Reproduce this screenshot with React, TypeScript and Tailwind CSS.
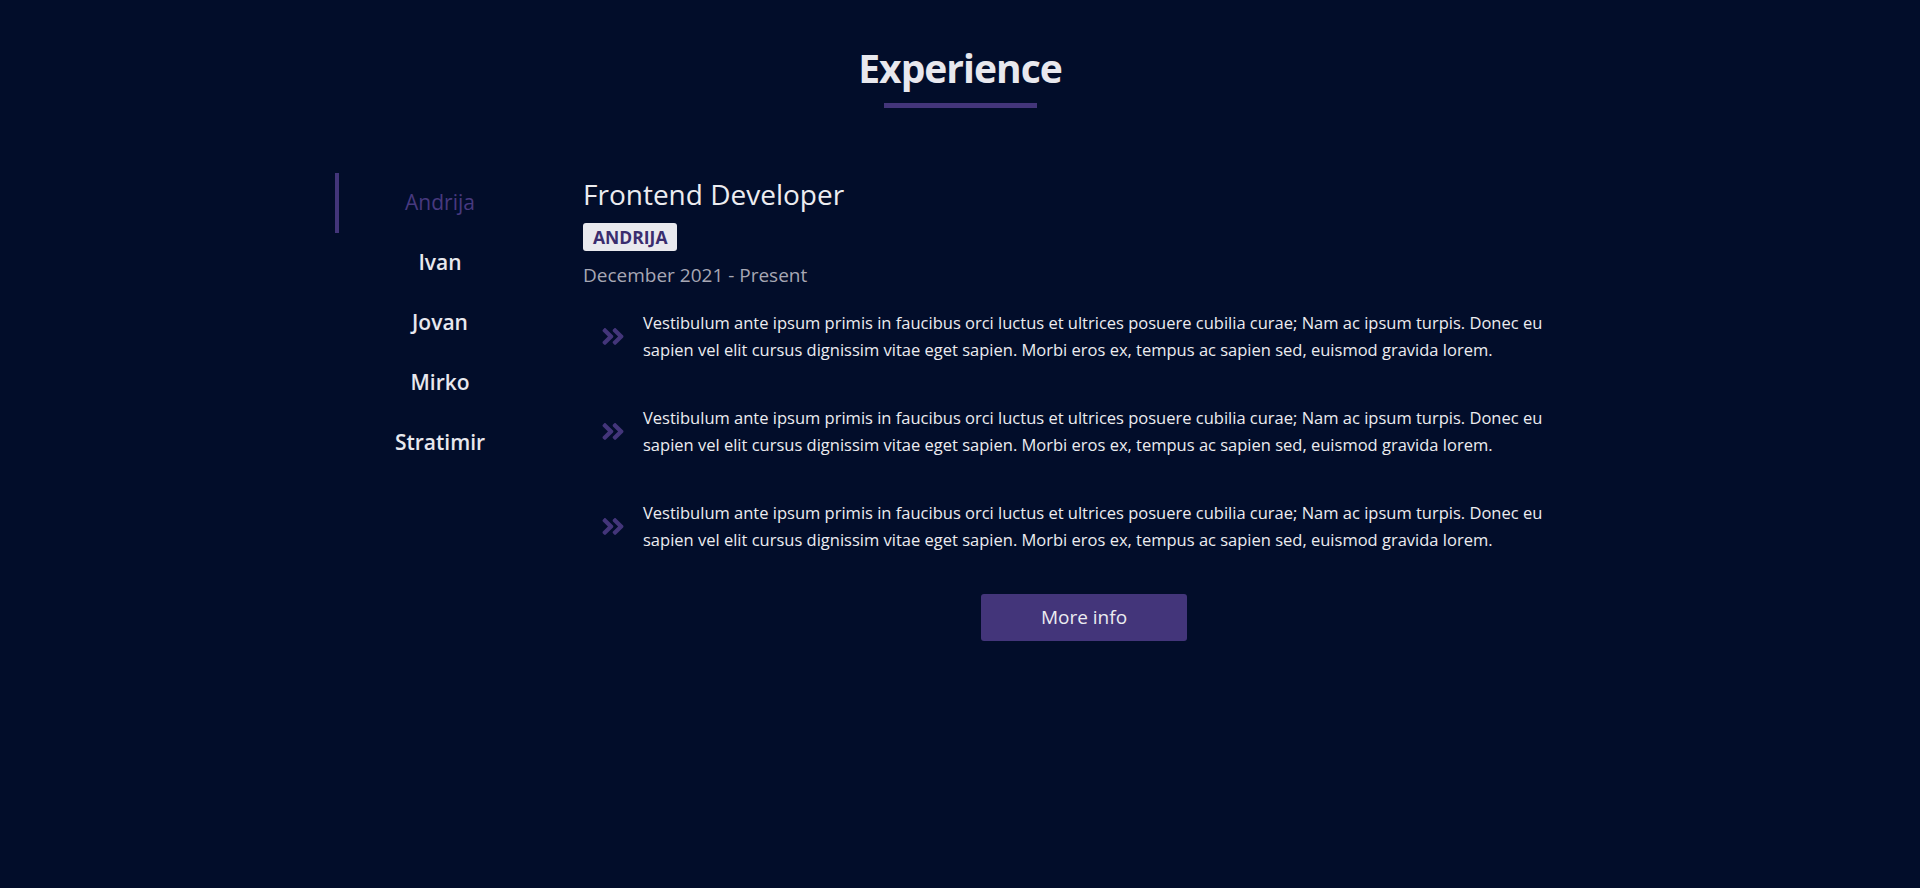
import { useState } from "react";
import { FaAngleDoubleRight } from "react-icons/fa";

const people = ["Andrija", "Ivan", "Jovan", "Mirko", "Stratimir"];

const duties = [
  "Vestibulum ante ipsum primis in faucibus orci luctus et ultrices posuere cubilia curae; Nam ac ipsum turpis. Donec eu sapien vel elit cursus dignissim vitae eget sapien. Morbi eros ex, tempus ac sapien sed, euismod gravida lorem.",
  "Vestibulum ante ipsum primis in faucibus orci luctus et ultrices posuere cubilia curae; Nam ac ipsum turpis. Donec eu sapien vel elit cursus dignissim vitae eget sapien. Morbi eros ex, tempus ac sapien sed, euismod gravida lorem.",
  "Vestibulum ante ipsum primis in faucibus orci luctus et ultrices posuere cubilia curae; Nam ac ipsum turpis. Donec eu sapien vel elit cursus dignissim vitae eget sapien. Morbi eros ex, tempus ac sapien sed, euismod gravida lorem.",
];

const App = () => {
  const [active, setActive] = useState(0);

  return (
    <div className="min-h-screen bg-[#020d2a] text-[#e8e8ee] font-['Open_Sans',sans-serif]">
      {/* Title */}
      <div className="pt-[41px] flex flex-col items-center">
        <h2 className="text-[39px] font-bold leading-[54px] tracking-[-1px]">Experience</h2>
        <div className="mt-[8px] w-[153px] h-[5px] bg-[#43357a]" />
      </div>

      <div className="w-[1250px] mx-auto mt-[65px] flex">
        {/* Tabs */}
        <div className="w-[206px] shrink-0 flex flex-col">
          {people.map((name, i) => (
            <button
              key={name}
              onClick={() => setActive(i)}
              className={`h-[60px] flex items-center justify-center text-[21px] border-l-[4px] ${
                i === active
                  ? "border-[#43357a] text-[#47397f] font-medium"
                  : "border-transparent text-[#e8e8ee] font-semibold"
              }`}
            >
              {name}
            </button>
          ))}
        </div>

        {/* Job */}
        <div className="flex-1 pl-[42px]">
          <h3 className="mt-[3px] text-[28px] leading-[36px] font-normal text-[#ececf0]">Frontend Developer</h3>
          <span className="inline-block mt-[11px] px-[10px] h-[28px] leading-[28px] rounded-[3px] bg-[#e9e9ee] text-[#3a2d6e] text-[17.5px] font-bold">
            {people[active].toUpperCase()}
          </span>
          <p className="mt-[10px] text-[19px] leading-[28px] text-[#a7a7b4]">December 2021 - Present</p>

          <div className="mt-[20px] flex flex-col gap-[41px]">
            {duties.map((text, i) => (
              <div key={i} className="flex items-center">
                <FaAngleDoubleRight className="w-[60px] shrink-0 text-[#43357a] text-[27px]" />
                <p className="text-[16.5px] leading-[27px] text-[#ececf0] pr-[30px]">{text}</p>
              </div>
            ))}
          </div>

          <div className="mt-[41px] flex justify-center">
            <button className="w-[206px] h-[47px] rounded-[3px] bg-[#43357a] text-[19px] text-[#ececf0]">
              More info
            </button>
          </div>
        </div>
      </div>
    </div>
  );
};

export default App;
